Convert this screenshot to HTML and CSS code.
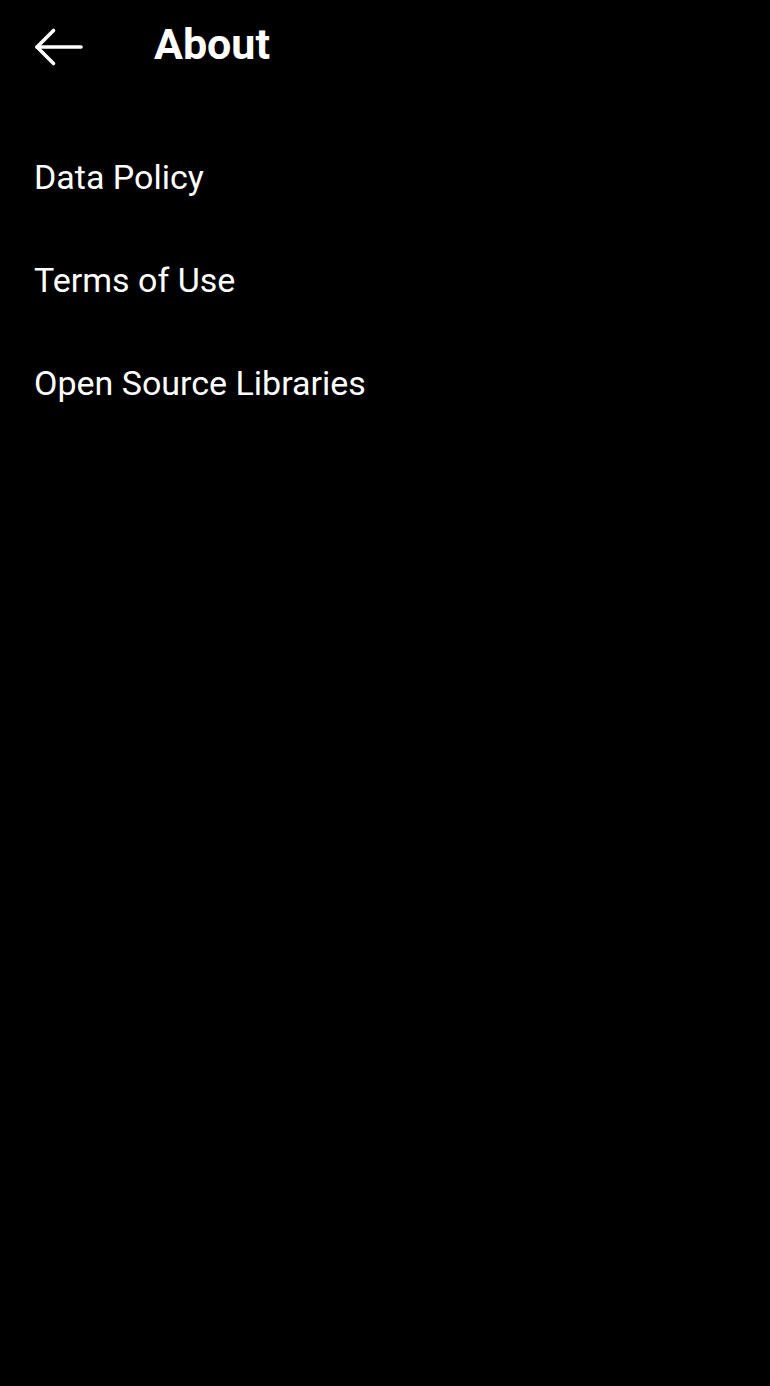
FILE: index.html
```html
<!DOCTYPE html>
<html lang="en">
<head>
<meta charset="utf-8">
<title>About</title>
<link rel="stylesheet" href="styles.css">
</head>
<body>
<div class="screen">
  <header class="topbar">
    <button class="back" aria-label="Back">
      <svg width="52" height="40" viewBox="0 0 52 40" fill="none" stroke="#fff" stroke-width="3.6" stroke-linecap="round" stroke-linejoin="round">
        <path d="M3 20H47"/>
        <path d="M19.5 3.5L3 20L19.5 36.5"/>
      </svg>
    </button>
    <h1 class="title">About</h1>
  </header>
  <ul class="menu">
    <li class="item">Data Policy</li>
    <li class="item">Terms of Use</li>
    <li class="item">Open Source Libraries</li>
  </ul>
</div>
</body>
</html>
```

FILE: styles.css
```css
html, body {
  margin: 0;
  padding: 0;
  background: #000;
}
body {
  font-family: Roboto, "Noto Sans", "Liberation Sans", sans-serif;
  color: #fff;
}
.screen {
  width: 770px;
  min-height: 1386px;
  background: #000;
}
.topbar {
  height: 92px;
  display: flex;
  align-items: center;
  padding-left: 34px;
}
.back {
  background: none;
  border: 0;
  padding: 0;
  margin: 2px 0 0 0;
  width: 52px;
  height: 40px;
  display: flex;
}
.title {
  margin: 0 0 4px 68px;
  font-size: 43px;
  font-weight: 700;
  line-height: 88px;
  color: #fff;
}
.menu {
  list-style: none;
  margin: 0;
  padding: 34px 0 0 34px;
}
.item {
  font-size: 34px;
  line-height: 103px;
  height: 103px;
  color: #fff;
}
```
